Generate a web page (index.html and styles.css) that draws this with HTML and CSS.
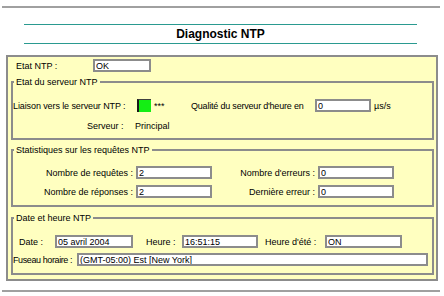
FILE: index.html
```html
<!DOCTYPE html>
<html lang="fr">
<head>
    <meta charset="UTF-8">
    <title>Diagnostic NTP</title>
    <link rel="stylesheet" href="styles.css">
</head>
<body>
    <div class="top-rule"></div>
    <h1 class="title">Diagnostic NTP</h1>

    <div class="panel">
        <div class="row state-row">
            <span class="state-label">Etat NTP :</span>
            <input class="field w-state" type="text" value="OK">
        </div>

        <fieldset class="group g-server">
            <legend>Etat du serveur NTP</legend>
            <div class="row r1">
                <span class="link-label">Liaison vers le serveur NTP :</span>
                <span class="led"></span>
                <span class="stars">***</span>
                <span class="quality-label">Qualité du serveur d'heure en</span>
                <input class="field w-quality" type="text" value="0">
                <span class="unit">µs/s</span>
            </div>
            <div class="row r2">
                <span class="server-label">Serveur :</span>
                <span>Principal</span>
            </div>
        </fieldset>

        <fieldset class="group g-stats">
            <legend>Statistiques sur les requêtes NTP</legend>
            <div class="stats-grid">
                <span class="lbl-a">Nombre de requêtes :</span>
                <input class="field" type="text" value="2">
                <span class="lbl-b">Nombre d'erreurs :</span>
                <input class="field" type="text" value="0">
                <span class="lbl-a">Nombre de réponses :</span>
                <input class="field" type="text" value="2">
                <span class="lbl-b">Dernière erreur :</span>
                <input class="field" type="text" value="0">
            </div>
        </fieldset>

        <fieldset class="group g-date">
            <legend>Date et heure NTP</legend>
            <div class="row r1">
                <span class="date-label">Date :</span>
                <input class="field w-date" type="text" value="05 avril 2004">
                <span class="hour-label">Heure :</span>
                <input class="field w-hour" type="text" value="16:51:15">
                <span class="dst-label">Heure d'été :</span>
                <input class="field w-dst" type="text" value="ON">
            </div>
            <div class="row r2">
                <span class="tz-label">Fuseau horaire :</span>
                <input class="field w-tz" type="text" value="(GMT-05:00) Est [New York]">
            </div>
        </fieldset>
    </div>

    <div class="bottom-rule"></div>
</body>
</html>
```

FILE: styles.css
```css
html, body {
    margin: 0;
    padding: 0;
    background-color: #fff;
    color: #000;
    font-family: "Liberation Sans", Arial, sans-serif;
    font-size: 9px;
}

.top-rule {
    margin: 6px 4px 0 2px;
    border-top: 2px solid #a0a0a0;
}

.title {
    margin: 16px 27px 0 24px;
    height: 18px;
    border-top: 1px solid #2a9a90;
    border-bottom: 1px solid #2a9a90;
    font-size: 12px;
    font-weight: bold;
    line-height: 18px;
    text-align: center;
}

.panel {
    margin: 11px 6px 0 6px;
    height: 222px;
    border: 2px solid #8c8c8c;
    background-color: #ffffc0;
    overflow: hidden;
}

.row {
    display: flex;
    align-items: center;
    height: 13px;
    white-space: nowrap;
}

.field {
    box-sizing: border-box;
    height: 13px;
    margin: 0;
    padding: 0 1px;
    border: 2px solid #8c8c8c;
    border-radius: 0;
    background-color: #fff;
    color: #000;
    font-family: "Liberation Sans", Arial, sans-serif;
    font-size: 9px;
    outline: none;
}

/* Etat NTP */
.state-row {
    margin-top: 2px;
    padding-left: 8px;
}

.state-label {
    width: 77px;
}

.w-state {
    width: 58px;
}

/* fieldsets */
.group {
    margin: 0 2px 0 3px;
    padding: 0;
    border: 2px solid #8c8c8c;
}

.group legend {
    height: 10px;
    margin-left: 1px;
    padding: 0 2px;
    line-height: 10px;
}

.g-server {
    margin-top: 5px;
    padding-bottom: 6px;
}

.g-server .r1 {
    margin-top: 12px;
}

.g-server .r2 {
    margin-top: 7px;
}

.link-label {
    width: 124px;
    letter-spacing: -0.1px;
}

.led {
    box-sizing: border-box;
    width: 14px;
    height: 13px;
    background-color: #14ee14;
    border-left: 2px solid #1a1a1a;
    border-top: 1px solid #404040;
}

.stars {
    width: 37px;
    margin-left: 3px;
}

.quality-label {
    width: 124px;
    letter-spacing: -0.2px;
}

.w-quality {
    width: 56px;
}

.unit {
    margin-left: 3px;
}

.server-label {
    width: 48px;
    margin-left: 74px;
}

.g-stats {
    margin-top: 5px;
    padding-bottom: 7px;
}

.stats-grid {
    display: grid;
    grid-template-columns: 123px 76px 106px 76px;
    grid-auto-rows: 13px;
    row-gap: 6px;
    align-items: center;
    margin-top: 11px;
    white-space: nowrap;
}

.lbl-a, .lbl-b {
    text-align: right;
    padding-right: 3px;
}

.g-date {
    margin-top: 6px;
    padding-bottom: 7px;
}

.g-date .r1 {
    margin-top: 12px;
}

.g-date .r2 {
    margin-top: 5px;
}

.date-label {
    width: 36px;
    margin-left: 6px;
}

.w-date {
    width: 78px;
}

.hour-label {
    width: 36px;
    margin-left: 13px;
}

.w-hour {
    width: 76px;
}

.dst-label {
    width: 60px;
    margin-left: 7px;
}

.w-dst {
    width: 77px;
}

.tz-label {
    flex-shrink: 0;
    width: 64px;
    letter-spacing: -0.4px;
}

.w-tz {
    width: 351px;
}

.bottom-rule {
    margin: 9px 4px 0 2px;
    border-top: 2px solid #a0a0a0;
}
```
